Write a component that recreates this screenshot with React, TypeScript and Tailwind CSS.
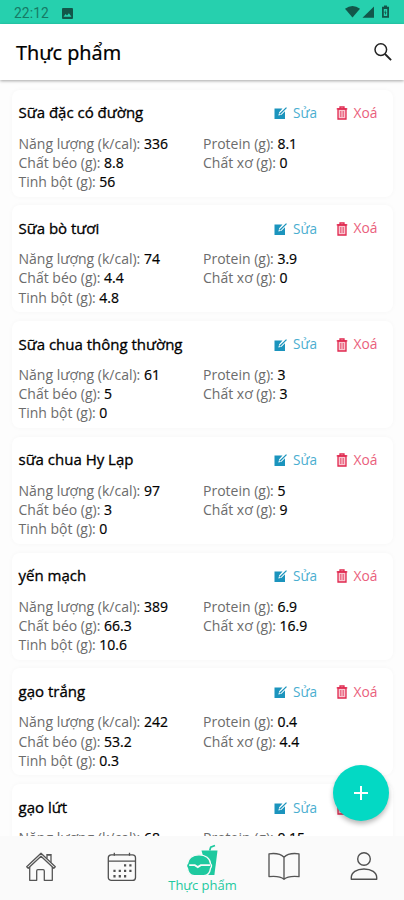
import React from "react";

type Food = {
  name: string;
  energy: string;
  protein: string;
  fat: string;
  fiber: string;
  starch: string;
};

const foods: Food[] = [
  { name: "Sữa đặc có đường", energy: "336", protein: "8.1", fat: "8.8", fiber: "0", starch: "56" },
  { name: "Sữa bò tươi", energy: "74", protein: "3.9", fat: "4.4", fiber: "0", starch: "4.8" },
  { name: "Sữa chua thông thường", energy: "61", protein: "3", fat: "5", fiber: "3", starch: "0" },
  { name: "sữa chua Hy Lạp", energy: "97", protein: "5", fat: "3", fiber: "9", starch: "0" },
  { name: "yến mạch", energy: "389", protein: "6.9", fat: "66.3", fiber: "16.9", starch: "10.6" },
  { name: "gạo trắng", energy: "242", protein: "0.4", fat: "53.2", fiber: "4.4", starch: "0.3" },
  { name: "gạo lứt", energy: "68", protein: "0.15", fat: "1.5", fiber: "2", starch: "14" },
];

function Field({ label, value }: { label: string; value: string }) {
  return (
    <div className="h-[19.2px] whitespace-nowrap">
      <span className="text-[#6c6c6c]">{label}:</span>{" "}
      <span className="text-black [-webkit-text-stroke:0.2px_black]">{value}</span>
    </div>
  );
}

function EditIcon() {
  return (
    <svg width="14" height="14" viewBox="0 0 14 14" fill="none">
      <path d="M.5 2.5h8L5.2 6.3 4.4 9.6l3.1-.8L11 5.3V13H.5z" fill="#1b94bd" />
      <path d="M5.7 8.2 12.5 1.6" stroke="#1b94bd" strokeWidth="1.3" />
    </svg>
  );
}

function TrashIcon() {
  return (
    <svg width="12" height="14" viewBox="0 0 12 14" fill="none" stroke="#e0284f" strokeWidth="1.3">
      <path d="M2 3h8v10H2z" fill="#f9c6d0" />
      <path d="M.7 2.8h10.6M4 2.5V1h4v1.5" />
      <path d="M4.8 5v6M7.2 5v6" strokeWidth=".8" />
    </svg>
  );
}

function FoodCard({ food }: { food: Food }) {
  return (
    <section className="h-[107px] shrink-0 rounded-lg bg-white px-[7px] pt-[13px] shadow-[0_0_5px_rgba(0,0,0,0.03)]">
      <div className="flex h-5 items-center">
        <h2 className="flex-1 whitespace-nowrap pb-px text-[15px] leading-[18px] text-black [-webkit-text-stroke:0.3px_black]">{food.name}</h2>
        <div className="flex w-[61.5px] items-center gap-[5px] pt-px text-[13.6px] text-[#4aaed0]">
          <EditIcon />
          Sửa
        </div>
        <div className="flex w-[50px] items-center gap-1.5 pt-px text-[13.8px] text-[#ea607c]">
          <TrashIcon />
          Xoá
        </div>
      </div>
      <div className="mt-[11px] grid grid-cols-[184.5px_1fr] text-[14px] leading-[19.2px]">
        <Field label="Năng lượng (k/cal)" value={food.energy} />
        <Field label="Protein (g)" value={food.protein} />
        <Field label="Chất béo (g)" value={food.fat} />
        <Field label="Chất xơ (g)" value={food.fiber} />
        <Field label="Tinh bột (g)" value={food.starch} />
      </div>
    </section>
  );
}

function StatusBar() {
  return (
    <div className="flex h-6 shrink-0 items-center bg-[#26d0ae] pl-3.5 pr-[13px] text-[#167a65]">
      <span className="w-[48px] pt-[3px] font-[Roboto,sans-serif] text-[13.8px] leading-none tracking-[0.1px]">22:12</span>
      <svg className="mt-[2px]" width="11" height="11" viewBox="0 0 11 11">
        <path fillRule="evenodd" fill="#12564a" d="M1 0h9a1 1 0 0 1 1 1v9a1 1 0 0 1-1 1H1a1 1 0 0 1-1-1V1a1 1 0 0 1 1-1zM1.5 8.8h8L6.9 5.2 5 7.6 3.6 6z" />
      </svg>
      <svg className="ml-auto" width="46" height="14" viewBox="0 0 46 14" fill="#12564a">
        <path d="M0 3.7Q7.5-1.6 15 3.7L7.5 12.5z" />
        <path d="M29 1.5v11.3H17.5z" />
        <path fillRule="evenodd" d="M37 1.8h2V.6h3v1.2h2v11h-7zM38.8 4v6.9h3.4V4zM40.6 4.7v2.5h1L40 10.3V7.7h-.8z" />
      </svg>
    </div>
  );
}

function HomeIcon() {
  return (
    <svg width="32" height="32" viewBox="0 0 32 32" fill="none" stroke="#555" strokeWidth="1.3" strokeLinejoin="round">
      <path d="M1.7 15.8 16 2.2l14.3 13.6-1.5 1.5L16 5.2 3.2 17.3z" />
      <path d="M4.7 16v13.3h7v-9.4q0-1.2 1.2-1.2h5.2q1.2 0 1.2 1.2v9.4h8V16M22 7.6V4h4v7.6M21.3 3.7h5.4" />
    </svg>
  );
}

function CalendarIcon() {
  return (
    <svg width="30" height="30" viewBox="0 0 30 30" fill="none" stroke="#505050" strokeWidth="1.3">
      <rect x="1.3" y="2.8" width="27.2" height="25.6" rx="3" />
      <path d="M1.3 9.2h27.2M7.3.8v3M22.5.8v3" />
      <path strokeWidth="2.4" strokeDasharray="2.2 3.1" d="M17 13.4h7.6M6.4 18.9h18.2M6.4 24.2h13" />
    </svg>
  );
}

function FoodIcon() {
  return (
    <svg width="32" height="33" viewBox="0 0 32 33" fill="#1ec99f">
      <path d="M15.5 6.5h16L28.4 31h-6z" />
      <path d="m23.7 6.5 1-3.3 4.3-1.7" fill="none" stroke="#1ec99f" strokeWidth="1.7" />
      <path d="M1.5 19.6C1.9 14.3 6.5 10.8 13 10.8s11.1 3.5 11.5 8.8c1.2 1.2 1.2 3.2 0 4.8-.6 4.8-2.7 7.2-6.7 7.2H8.2c-4 0-6.1-2.4-6.7-7.2-1.2-1.6-1.2-3.6 0-4.8z" stroke="#fafafa" strokeWidth="1.3" />
      <path d="M3.2 21.2h5.6l3 1.9 3-1.9h9.5" fill="none" stroke="#fafafa" strokeWidth="1.8" />
    </svg>
  );
}

function BookIcon() {
  return (
    <svg width="32" height="28" viewBox="0 0 32 28" fill="none" stroke="#555" strokeWidth="1.35" strokeLinejoin="round">
      <path d="M16 5.2C12.8 1.8 7.2 1 1 1.8v22.8c6.2-.6 12 0 15 2.6 3-2.6 8.8-3.2 15-2.6V1.8c-6.2-.8-11.8 0-15 3.4zv22" />
    </svg>
  );
}

function PersonIcon() {
  return (
    <svg width="28" height="30" viewBox="0 0 28 30" fill="none" stroke="#505050" strokeWidth="1.4">
      <circle cx="14" cy="8" r="6.3" />
      <path d="M1.3 28.3v-1.7C1.3 21.5 6.4 18 14 18s12.7 3.5 12.7 8.6v1.7z" strokeLinejoin="round" />
    </svg>
  );
}

export default function App() {
  return (
    <main className="relative flex h-[900px] w-[404px] flex-col overflow-hidden bg-white font-['Open_Sans','Noto_Sans',sans-serif]">
      <StatusBar />
      <header className="z-10 flex h-[56px] shrink-0 items-center justify-between bg-white pl-4 pr-[11px] shadow-[0_1px_3px_rgba(0,0,0,0.35)]">
        <h1 className="pt-[2px] font-['Noto_Sans',sans-serif] text-[19.8px] font-normal text-black [-webkit-text-stroke:0.2px_black]">Thực phẩm</h1>
        <svg width="20" height="20" viewBox="0 0 20 20" fill="none" stroke="#222" strokeWidth="1.5">
          <circle cx="7.8" cy="7.6" r="5.8" />
          <path d="m12 12 6.1 6.1" strokeWidth="1.9" />
        </svg>
      </header>
      <div className="flex min-h-0 flex-1 flex-col gap-[8.8px] overflow-hidden bg-[#fdfdfd] px-[11.5px] pt-[9.5px]">
        {foods.map((food) => (
          <FoodCard key={food.name} food={food} />
        ))}
      </div>
      <nav className="z-10 grid h-[64px] shrink-0 grid-cols-5 bg-[#fafafa]">
        <div className="flex justify-center pl-px pt-[15px]"><HomeIcon /></div>
        <div className="flex justify-center pl-0.5 pt-4"><CalendarIcon /></div>
        <div className="flex flex-col items-center pt-[8px] text-[#1ec99f]">
          <FoodIcon />
          <span className="whitespace-nowrap pl-px text-[13px] leading-[17px]">Thực phẩm</span>
        </div>
        <div className="flex justify-center pl-[2px] pt-4"><BookIcon /></div>
        <div className="flex justify-center pt-[15px]"><PersonIcon /></div>
      </nav>
      <button className="absolute top-[765px] left-[333px] z-20 flex h-14 w-14 items-center justify-center rounded-full bg-[#03d9c4] shadow-[0_3px_5px_rgba(0,0,0,0.28)]">
        <svg width="14" height="14" viewBox="0 0 14 14" stroke="white" strokeWidth="2">
          <path d="M7 0v14M0 7h14" />
        </svg>
      </button>
    </main>
  );
}
